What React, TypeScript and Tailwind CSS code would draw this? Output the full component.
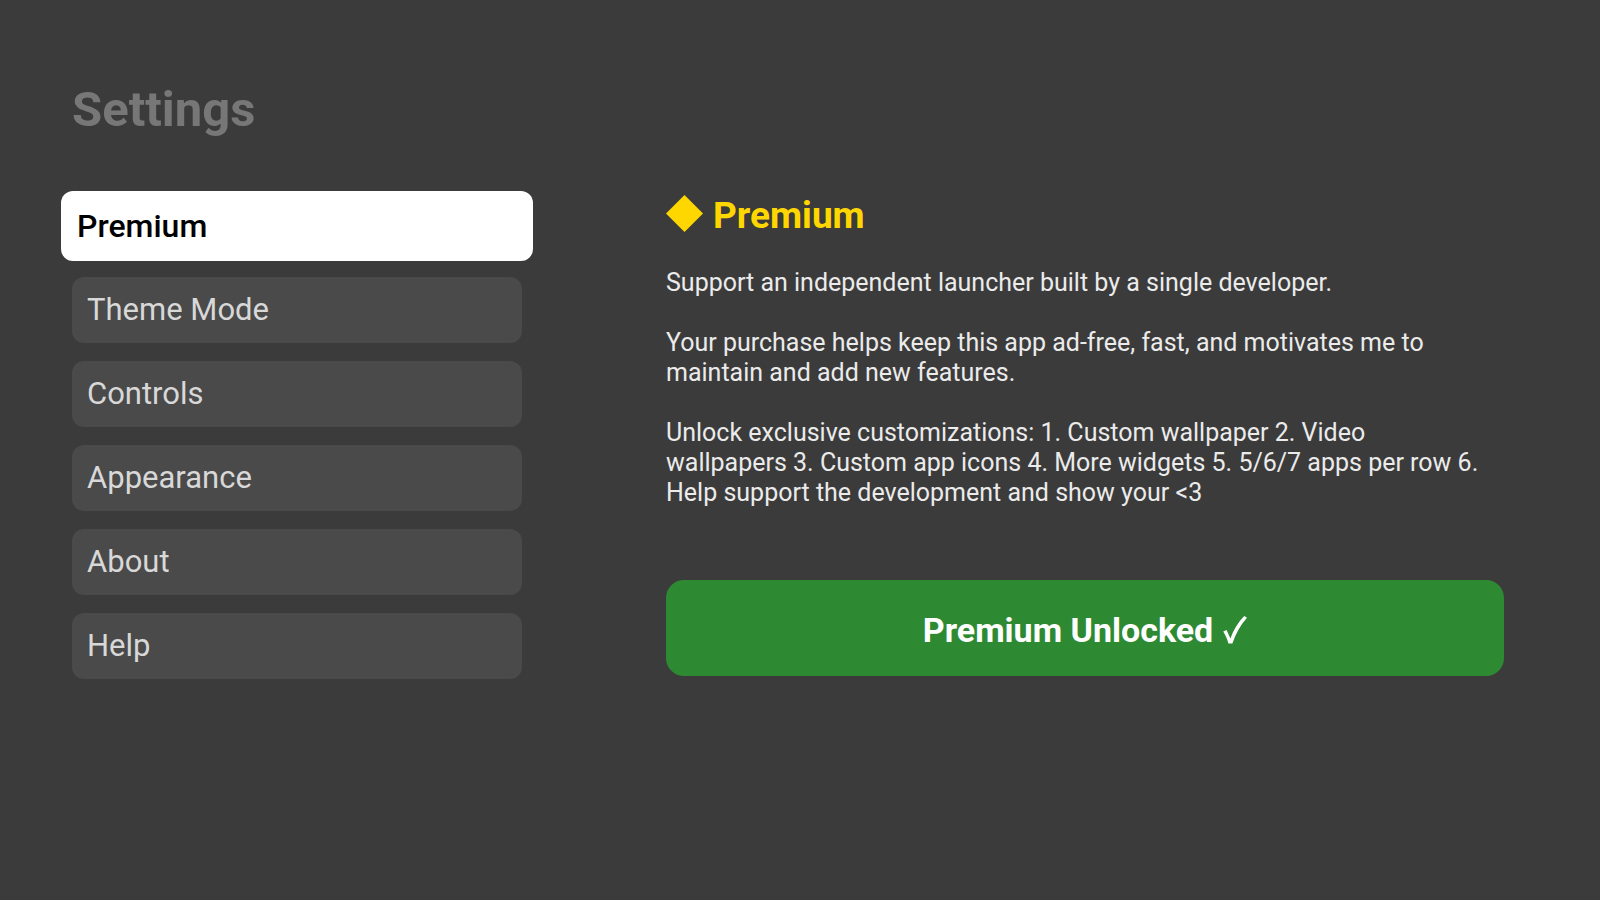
import { useState } from "react";

const sections = ["Premium", "Theme Mode", "Controls", "Appearance", "About", "Help"];

export default function App() {
  const [active, setActive] = useState("Premium");

  return (
    <div className="min-h-screen bg-[#3b3b3b] pt-20 pr-24 pb-12 pl-[72px] font-['Roboto',sans-serif]">
      <h1 className="text-[49px] leading-[60px] font-bold text-[#777777]">Settings</h1>
      <main className="mt-[53px] grid grid-cols-[450fr_838fr] items-start gap-36">
        <nav aria-label="Settings sections">
          <ul className="flex flex-col gap-[18px]">
            {sections.map((name) => (
              <li key={name} className="flex h-[66px] flex-col justify-center">
                <button
                  type="button"
                  aria-current={name === active ? "page" : undefined}
                  onClick={() => setActive(name)}
                  className={
                    name === active
                      ? "-mx-[11px] h-[70px] shrink-0 rounded-xl bg-white px-4 text-left text-[32px] font-medium text-black"
                      : "h-[66px] rounded-xl bg-[#4a4a4a] px-[15px] text-left text-[31px] text-[#d8d8d8]"
                  }
                >
                  {name}
                </button>
              </li>
            ))}
          </ul>
        </nav>
        <section aria-labelledby="premium-title">
          <h2 id="premium-title" className="flex h-[45px] items-center gap-2.5 text-[37px] font-bold text-[#ffd700]">
            <svg className="-mt-1 size-[37px]" viewBox="0 0 37 37" fill="currentColor" aria-hidden="true">
              <path d="M18.5 0 37 18.5 18.5 37 0 18.5Z" />
            </svg>
            Premium
          </h2>
          <div className="mt-[30px] flex flex-col gap-[30px] text-[25px] leading-[30px] text-[#ebebeb]">
            <p>Support an independent launcher built by a single developer.</p>
            <p>
              Your purchase helps keep this app ad-free, fast, and motivates me to
              <br />
              maintain and add new features.
            </p>
            <p>
              Unlock exclusive customizations: 1. Custom wallpaper 2. Video
              <br />
              wallpapers 3. Custom app icons 4. More widgets 5. 5/6/7 apps per row 6.
              <br />
              Help support the development and show your &lt;3
            </p>
          </div>
          <button
            type="button"
            className="mt-[72px] flex h-24 w-full items-center justify-center gap-2.5 rounded-[18px] bg-[#2d8a33] pt-1 text-[34px] font-bold text-white"
          >
            Premium Unlocked
            <svg className="h-7 w-6" viewBox="0 0 24 28" fill="currentColor" role="img" aria-label="unlocked">
              <path d="M0.2 15.6 3.6 14 7.4 22.6C10.4 14.2 15 6 21.2 0L24 1.8C17.4 9 12.6 18 9.4 27.4H5.4C4.2 23 2.4 19 0.2 15.6Z" />
            </svg>
          </button>
        </section>
      </main>
    </div>
  );
}
